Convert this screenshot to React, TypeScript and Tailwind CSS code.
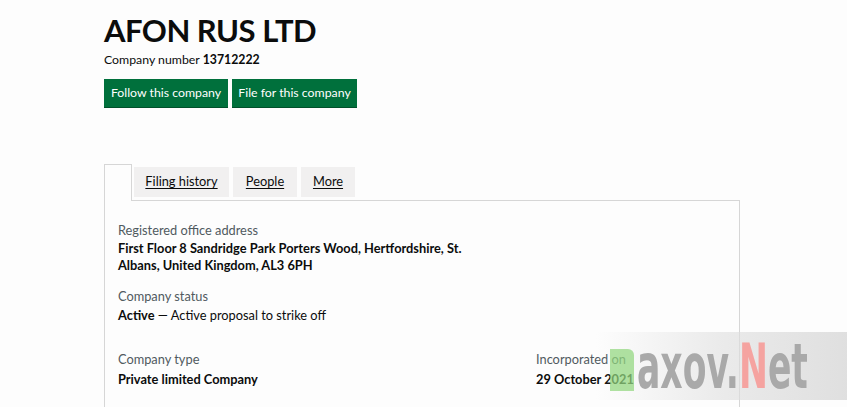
import React from "react";

export default function App() {
  return (
    <div
      className="relative w-[847px] h-[407px] overflow-hidden bg-[#fdfdfd] text-[#0b0c0c]"
      style={{ fontFamily: "Lato, 'Liberation Sans', Arial, sans-serif" }}
    >
      <div className="pl-[104px] pt-[12px]">
        <h1 className="text-[31px] leading-[36px] font-bold tracking-[-0.5px]">AFON RUS LTD</h1>
        <p className="mt-[3px] text-[12.3px] leading-[18px]">
          Company number <span className="font-bold">13712222</span>
        </p>
        <div className="mt-[10px] flex gap-[4px]">
          <button className="h-[28px] w-[124px] bg-[#00703c] text-white text-[12.3px] shadow-[0_1px_0_#00502a]">
            Follow this company
          </button>
          <button className="h-[28px] w-[125px] bg-[#00703c] text-white text-[12.3px] shadow-[0_1px_0_#00502a]">
            File for this company
          </button>
        </div>

        <div className="mt-[57px] w-[636px]">
          <div className="flex items-end">
            <div className="h-[37px] w-[28px] border-l border-t border-r border-[#d6d6d6] bg-[#fdfdfd]" />
            <div className="flex-1 flex items-end border-b border-[#d6d6d6] h-[37px] pl-[2px] gap-[4px]">
              <div className="h-[30px] mb-[3px] w-[95px] bg-[#f1f0f0] flex items-center justify-center text-[12.8px] text-[#0b0c0c] underline underline-offset-2">
                Filing history
              </div>
              <div className="h-[30px] mb-[3px] w-[64px] bg-[#f1f0f0] flex items-center justify-center text-[12.8px] underline underline-offset-2">
                People
              </div>
              <div className="h-[30px] mb-[3px] w-[54px] bg-[#f1f0f0] flex items-center justify-center text-[12.8px] underline underline-offset-2">
                More
              </div>
            </div>
          </div>
          <div className="h-[220px] border-l border-r border-[#d6d6d6] pl-[13px] pt-[20px] text-[12.8px] leading-[18px]">
            <p className="text-[#505a5f]">Registered office address</p>
            <p className="mt-[1px] font-bold leading-[17px]">
              <span className="block">First Floor 8 Sandridge Park Porters Wood, Hertfordshire, St.</span>
              <span className="block">Albans, United Kingdom, AL3 6PH</span>
            </p>
            <p className="mt-[13px] text-[#505a5f]">Company status</p>
            <p className="mt-[1px]">
              <span className="font-bold">Active</span> — Active proposal to strike off
            </p>
            <div className="mt-[26px] flex">
              <div className="w-[418px]">
                <p className="text-[#505a5f]">Company type</p>
                <p className="mt-[2px] font-bold">Private limited Company</p>
              </div>
              <div>
                <p className="text-[#505a5f]">Incorporated on</p>
                <p className="mt-[2px] font-bold">29 October 2021</p>
              </div>
            </div>
          </div>
        </div>
      </div>

      {/* watermark */}
      <div className="absolute left-[596px] top-[332px] w-[251px] h-[68px] bg-gradient-to-r from-[#ffffff00] via-[#dedede99] to-[#d8d8d8cc]">
        <div className="absolute left-[14px] top-[17px] w-[24px] h-[42px] bg-[#8fd67a] opacity-70 rounded-tr-[6px]" />
        <div
          className="absolute left-[41px] top-[0px] h-[66px] flex items-end leading-none font-bold origin-left scale-x-[0.62] whitespace-nowrap"
          style={{ fontFamily: "'DejaVu Sans Condensed', 'DejaVu Sans', sans-serif", fontSize: "62px" }}
        >
          <span className="text-[#a9a9a9]">axov.</span>
          <span className="text-[#f5a3a0]">N</span>
          <span className="text-[#a9a9a9]">et</span>
        </div>
      </div>
    </div>
  );
}
